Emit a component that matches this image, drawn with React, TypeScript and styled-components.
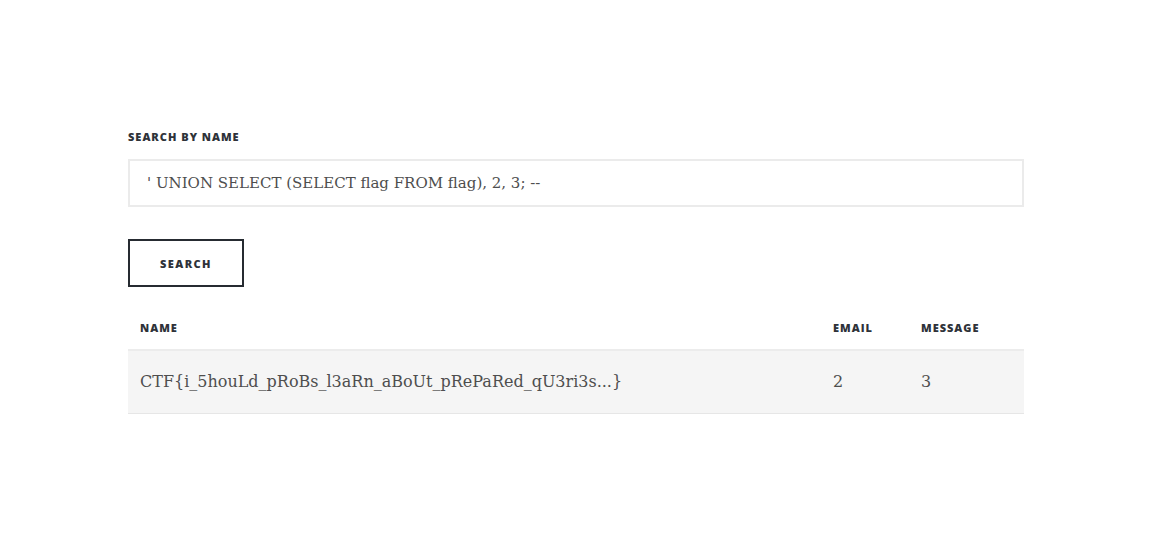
import React from "react";
import styled, { createGlobalStyle } from "styled-components";

const Global = createGlobalStyle`
  html, body { margin: 0; padding: 0; background: #ffffff; }
  * { box-sizing: border-box; }
`;

const Main = styled.main`
  width: 896px;
  margin: 0 auto;
  padding-top: 128px;
  display: flex;
  flex-direction: column;
  align-items: flex-start;
`;

const Label = styled.label`
  font-family: "Open Sans", "Liberation Sans", sans-serif;
  font-weight: 800;
  font-size: 11px;
  line-height: 18px;
  letter-spacing: 1px;
  text-transform: uppercase;
  color: #2e3239;
  margin-bottom: 13px;
`;

const Input = styled.input`
  width: 100%;
  height: 48px;
  border: 2px solid #ebebeb;
  border-radius: 0;
  padding: 0 17px;
  font-family: "DejaVu Serif", "Liberation Serif", serif;
  font-size: 15px;
  color: #4e4e4e;
  outline: none;
  background: #ffffff;
`;

const Button = styled.button`
  margin-top: 32px;
  width: 116px;
  height: 48px;
  border: 2px solid #262b31;
  background: transparent;
  font-family: "Open Sans", "Liberation Sans", sans-serif;
  font-weight: 800;
  font-size: 11px;
  letter-spacing: 1.4px;
  text-transform: uppercase;
  color: #2e3239;
  padding: 0;
  cursor: pointer;
`;

const Table = styled.table`
  margin-top: 20px;
  width: 100%;
  border-collapse: collapse;
`;

const Th = styled.th<{ $w?: number }>`
  text-align: left;
  font-family: "Open Sans", "Liberation Sans", sans-serif;
  font-weight: 800;
  font-size: 11px;
  line-height: 14px;
  letter-spacing: 1px;
  text-transform: uppercase;
  color: #2e3239;
  padding: 14px 12px;
  border-bottom: 2px solid #ececec;
  ${(p) => (p.$w ? `width: ${p.$w}px;` : "")}
`;

const Row = styled.tr`
  background: #f5f5f5;
  border-bottom: 1px solid #e6e6e6;
`;

const Td = styled.td`
  height: 63px;
  padding: 0 12px;
  vertical-align: middle;
  font-family: "DejaVu Serif", "Liberation Serif", serif;
  font-size: 16px;
  color: #4e4e4e;
`;

export default function App() {
  return (
    <>
      <Global />
      <Main>
        <Label htmlFor="name">Search by name</Label>
        <Input id="name" defaultValue="' UNION SELECT (SELECT flag FROM flag), 2, 3; --" />
        <Button>Search</Button>
        <Table>
          <thead>
            <tr>
              <Th>Name</Th>
              <Th $w={88}>Email</Th>
              <Th $w={115}>Message</Th>
            </tr>
          </thead>
          <tbody>
            <Row>
              <Td>CTF{"{"}i_5houLd_pRoBs_l3aRn_aBoUt_pRePaRed_qU3ri3s...{"}"}</Td>
              <Td>2</Td>
              <Td>3</Td>
            </Row>
          </tbody>
        </Table>
      </Main>
    </>
  );
}
